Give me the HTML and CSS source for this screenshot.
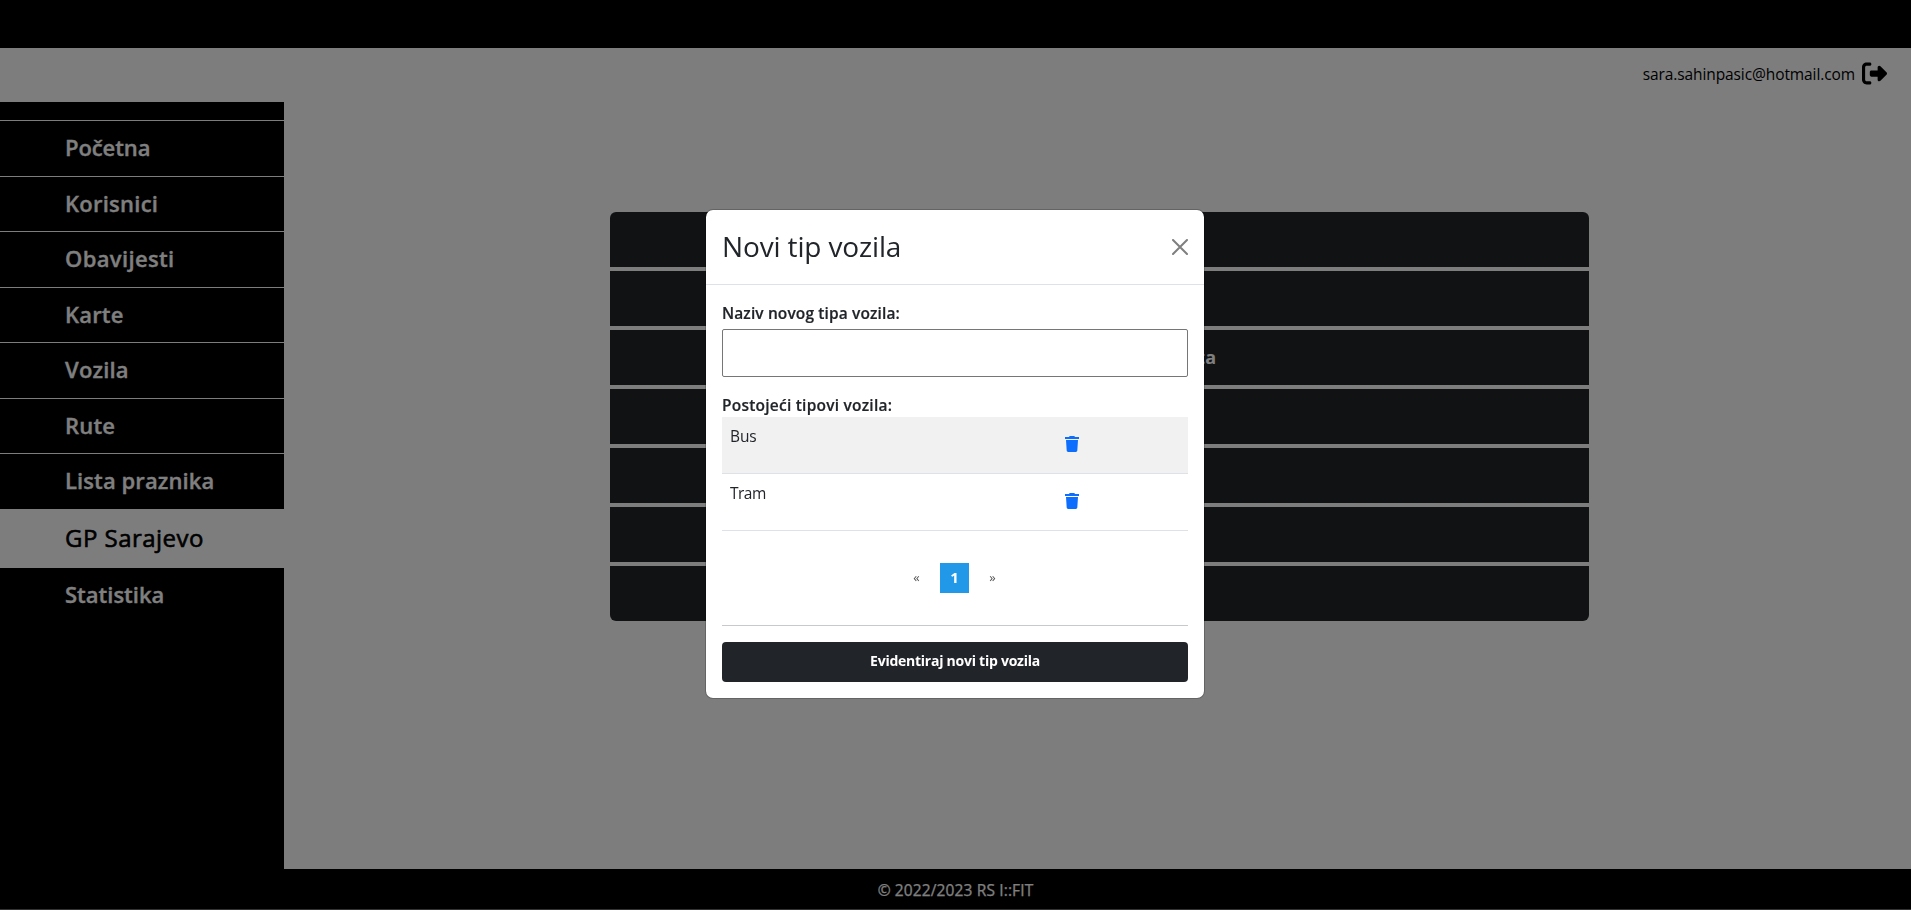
FILE: index.html
```html
<!DOCTYPE html>
<html lang="bs">
<head>
<meta charset="utf-8">
<title>GP Sarajevo</title>
<link rel="stylesheet" href="styles.css">
</head>
<body>
<div class="page">
  <div class="topbar"></div>
  <header class="header">
    <span class="email">sara.sahinpasic@hotmail.com</span>
    <svg class="logout" viewBox="0 0 512 512"><path d="M377.9 105.9L500.7 228.7c7.2 7.2 11.3 17.1 11.3 27.3s-4.1 20.1-11.3 27.3L377.9 406.1c-6.4 6.4-15 9.9-24 9.9c-18.7 0-33.9-15.2-33.9-33.9l0-62.1-128 0c-17.7 0-32-14.3-32-32l0-64c0-17.7 14.3-32 32-32l128 0 0-62.1c0-18.7 15.2-33.9 33.9-33.9c9 0 17.6 3.6 24 9.9zM160 96L96 96c-17.7 0-32 14.3-32 32l0 256c0 17.7 14.3 32 32 32l64 0c17.7 0 32 14.3 32 32s-14.3 32-32 32l-64 0c-53 0-96-43-96-96L0 128C0 75 43 32 96 32l64 0c17.7 0 32 14.3 32 32s-14.3 32-32 32z"/></svg>
  </header>
  <div class="main">
    <nav class="sidebar">
      <a class="item"><span class="w1">Početna</span></a>
      <a class="item"><span class="w2">Korisnici</span></a>
      <a class="item"><span class="w3">Obavijesti</span></a>
      <a class="item"><span class="w4">Karte</span></a>
      <a class="item"><span class="w4">Vozila</span></a>
      <a class="item"><span class="w4">Rute</span></a>
      <a class="item"><span class="w7">Lista praznika</span></a>
      <a class="item active"><span class="w8">GP Sarajevo</span></a>
      <a class="item last"><span>Statistika</span></a>
    </nav>
    <main class="content">
      <div class="menu">
        <div class="row"></div>
        <div class="row"></div>
        <div class="row"><span class="row-text">ta</span></div>
        <div class="row"></div>
        <div class="row"></div>
        <div class="row"></div>
        <div class="row"></div>
      </div>
    </main>
  </div>
  <footer class="footer"><span class="copy">© 2022/2023 RS I::FIT</span></footer>
</div>
<div class="backdrop">
  <section class="modal">
    <div class="modal-head">
      <span class="title">Novi tip vozila</span>
      <svg class="close" viewBox="0 0 16 16"><path d="M1 1l14 14M15 1L1 15" stroke="#7f7f7f" stroke-width="2" stroke-linecap="round"/></svg>
    </div>
    <div class="modal-body">
      <label class="label"><span class="l1">Naziv novog tipa vozila:</span></label>
      <input class="input" type="text">
      <div class="label second"><span class="l2">Postojeći tipovi vozila:</span></div>
      <div class="trow odd"><span class="cell bus">Bus</span><svg class="trash" viewBox="0 0 14 16"><path d="M4.300.5 4.700 0h4.600l.4.500.3.500h4v1.900H0V1h4zM1 4h12l-.7 10.600c0 .8-.7 1.400-1.500 1.400H3.200c-.8 0-1.500-.6-1.500-1.400z"/></svg></div>
      <div class="trow"><span class="cell">Tram</span><svg class="trash" viewBox="0 0 14 16"><path d="M4.300.5 4.700 0h4.600l.4.500.3.500h4v1.900H0V1h4zM1 4h12l-.7 10.600c0 .8-.7 1.400-1.500 1.400H3.200c-.8 0-1.500-.6-1.500-1.400z"/></svg></div>
      <div class="pager"><span class="arrow">«</span><span class="current">1</span><span class="arrow">»</span></div>
      <div class="rule"></div>
      <button class="submit"><span class="b1">Evidentiraj novi tip vozila</span></button>
    </div>
  </section>
</div>
</body>
</html>
```
FILE: styles.css
```css
* { box-sizing: border-box; }
body { margin: 0; font-family: "Trebuchet MS", "Open Sans", "Noto Sans", sans-serif; font-size: 16px; line-height: 24px; color: #212529; overflow: hidden; }
span { white-space: nowrap; }
.page { display: flex; flex-direction: column; height: 910px; background: #fafafa; border-bottom: 1px solid #666; }
.topbar { height: 48px; background: #000; }
.header { height: 54px; display: flex; justify-content: flex-end; align-items: flex-start; padding: 13px 24px 0 0; color: #000; }
.email { font-size: 15.5px; letter-spacing: -.1px; margin: 1px 7px 0 0; }
.logout { width: 25px; height: 25px; display: block; }
.main { display: flex; flex: 1; }
.sidebar { width: 284px; background: #000; padding-top: 18px; }
.item { display: flex; align-items: center; height: 55.5px; padding: 0 0 2px 65px; border-top: 1px solid #fafafa; color: #fff; font-size: 22px; font-weight: 600; -webkit-text-stroke: .3px; }
.item.active { height: 59px; background: #fafafa; color: #000; font-size: 24px; font-weight: 400; -webkit-text-stroke: .6px #000; }
.item.last { border-top: 0; }
.w1 { letter-spacing: -.1px; }
.w2 { letter-spacing: .25px; }
.w3 { letter-spacing: .36px; }
.w4 { letter-spacing: .18px; }
.w7 { letter-spacing: .1px; }
.w8 { letter-spacing: .47px; }
.content { flex: 1; padding: 110px 0 0 326px; }
.menu { width: 979px; display: flex; flex-direction: column; gap: 4px; border-radius: 6px; overflow: hidden; }
.row { height: 55px; background: #212529; color: #fff; font-size: 18px; font-weight: 700; padding: 15px 373px 0 0; text-align: right; }
.footer { height: 40px; background: #000; color: #fff; display: flex; align-items: center; justify-content: center; padding-top: 2px; font-size: 15.5px; }
.copy { letter-spacing: .13px; -webkit-text-stroke: .25px; }
.backdrop { position: fixed; inset: 0; background: rgba(0,0,0,.5); padding: 209px 1px 0 0; display: flex; justify-content: center; align-items: flex-start; }
.modal { width: 500px; height: 490px; background: #fff; background-clip: padding-box; border: 1px solid rgba(0,0,0,.2); border-radius: 8px; }
.modal-head { height: 75px; border-bottom: 1px solid #dee2e6; padding: 0 16px; display: flex; justify-content: space-between; align-items: center; }
.title { font-size: 28px; line-height: 42px; letter-spacing: -.14px; padding-bottom: 2px; }
.close { width: 16px; height: 16px; }
.modal-body { padding: 16px; display: flex; flex-direction: column; }
.label { height: 28px; font-size: 15.5px; font-weight: 600; line-height: 24px; -webkit-text-stroke: .2px; }
.l1 { letter-spacing: .12px; }
.l2 { letter-spacing: .23px; }
.input { height: 48px; border: 1px solid #767676; border-radius: 2px; padding: 0; background: #fff; outline: none; }
.second { height: 24px; margin-top: 16px; }
.trow { height: 57px; border-bottom: 1px solid #dee2e6; padding: 8px 109px 0 8px; display: flex; justify-content: space-between; align-items: flex-start; }
.cell { font-size: 15.5px; line-height: 23px; letter-spacing: -.5px; }
.bus { letter-spacing: -.1px; }
.odd { background: #f1f1f1; }
.trash { width: 14px; height: 16px; margin-top: 11px; fill: #0d6efd; }
.pager { margin-top: 32px; height: 30px; display: flex; justify-content: center; gap: 20px; padding-right: 1px; line-height: 29px; }
.current { width: 29px; background: #2199e8; color: #fff; text-align: center; font-size: 15px; font-weight: 700; }
.arrow { width: 7px; font-size: 13px; color: #555; display: flex; justify-content: center; }
.rule { height: 1px; background: #c8c9ca; margin: 32px 0 16px; }
.submit { height: 40px; border: 0; border-radius: 4px; background: #212529; color: #fff; font-family: inherit; font-weight: 700; font-size: 14px; padding: 0 0 3px; }
.b1 { letter-spacing: -.25px; }
```
